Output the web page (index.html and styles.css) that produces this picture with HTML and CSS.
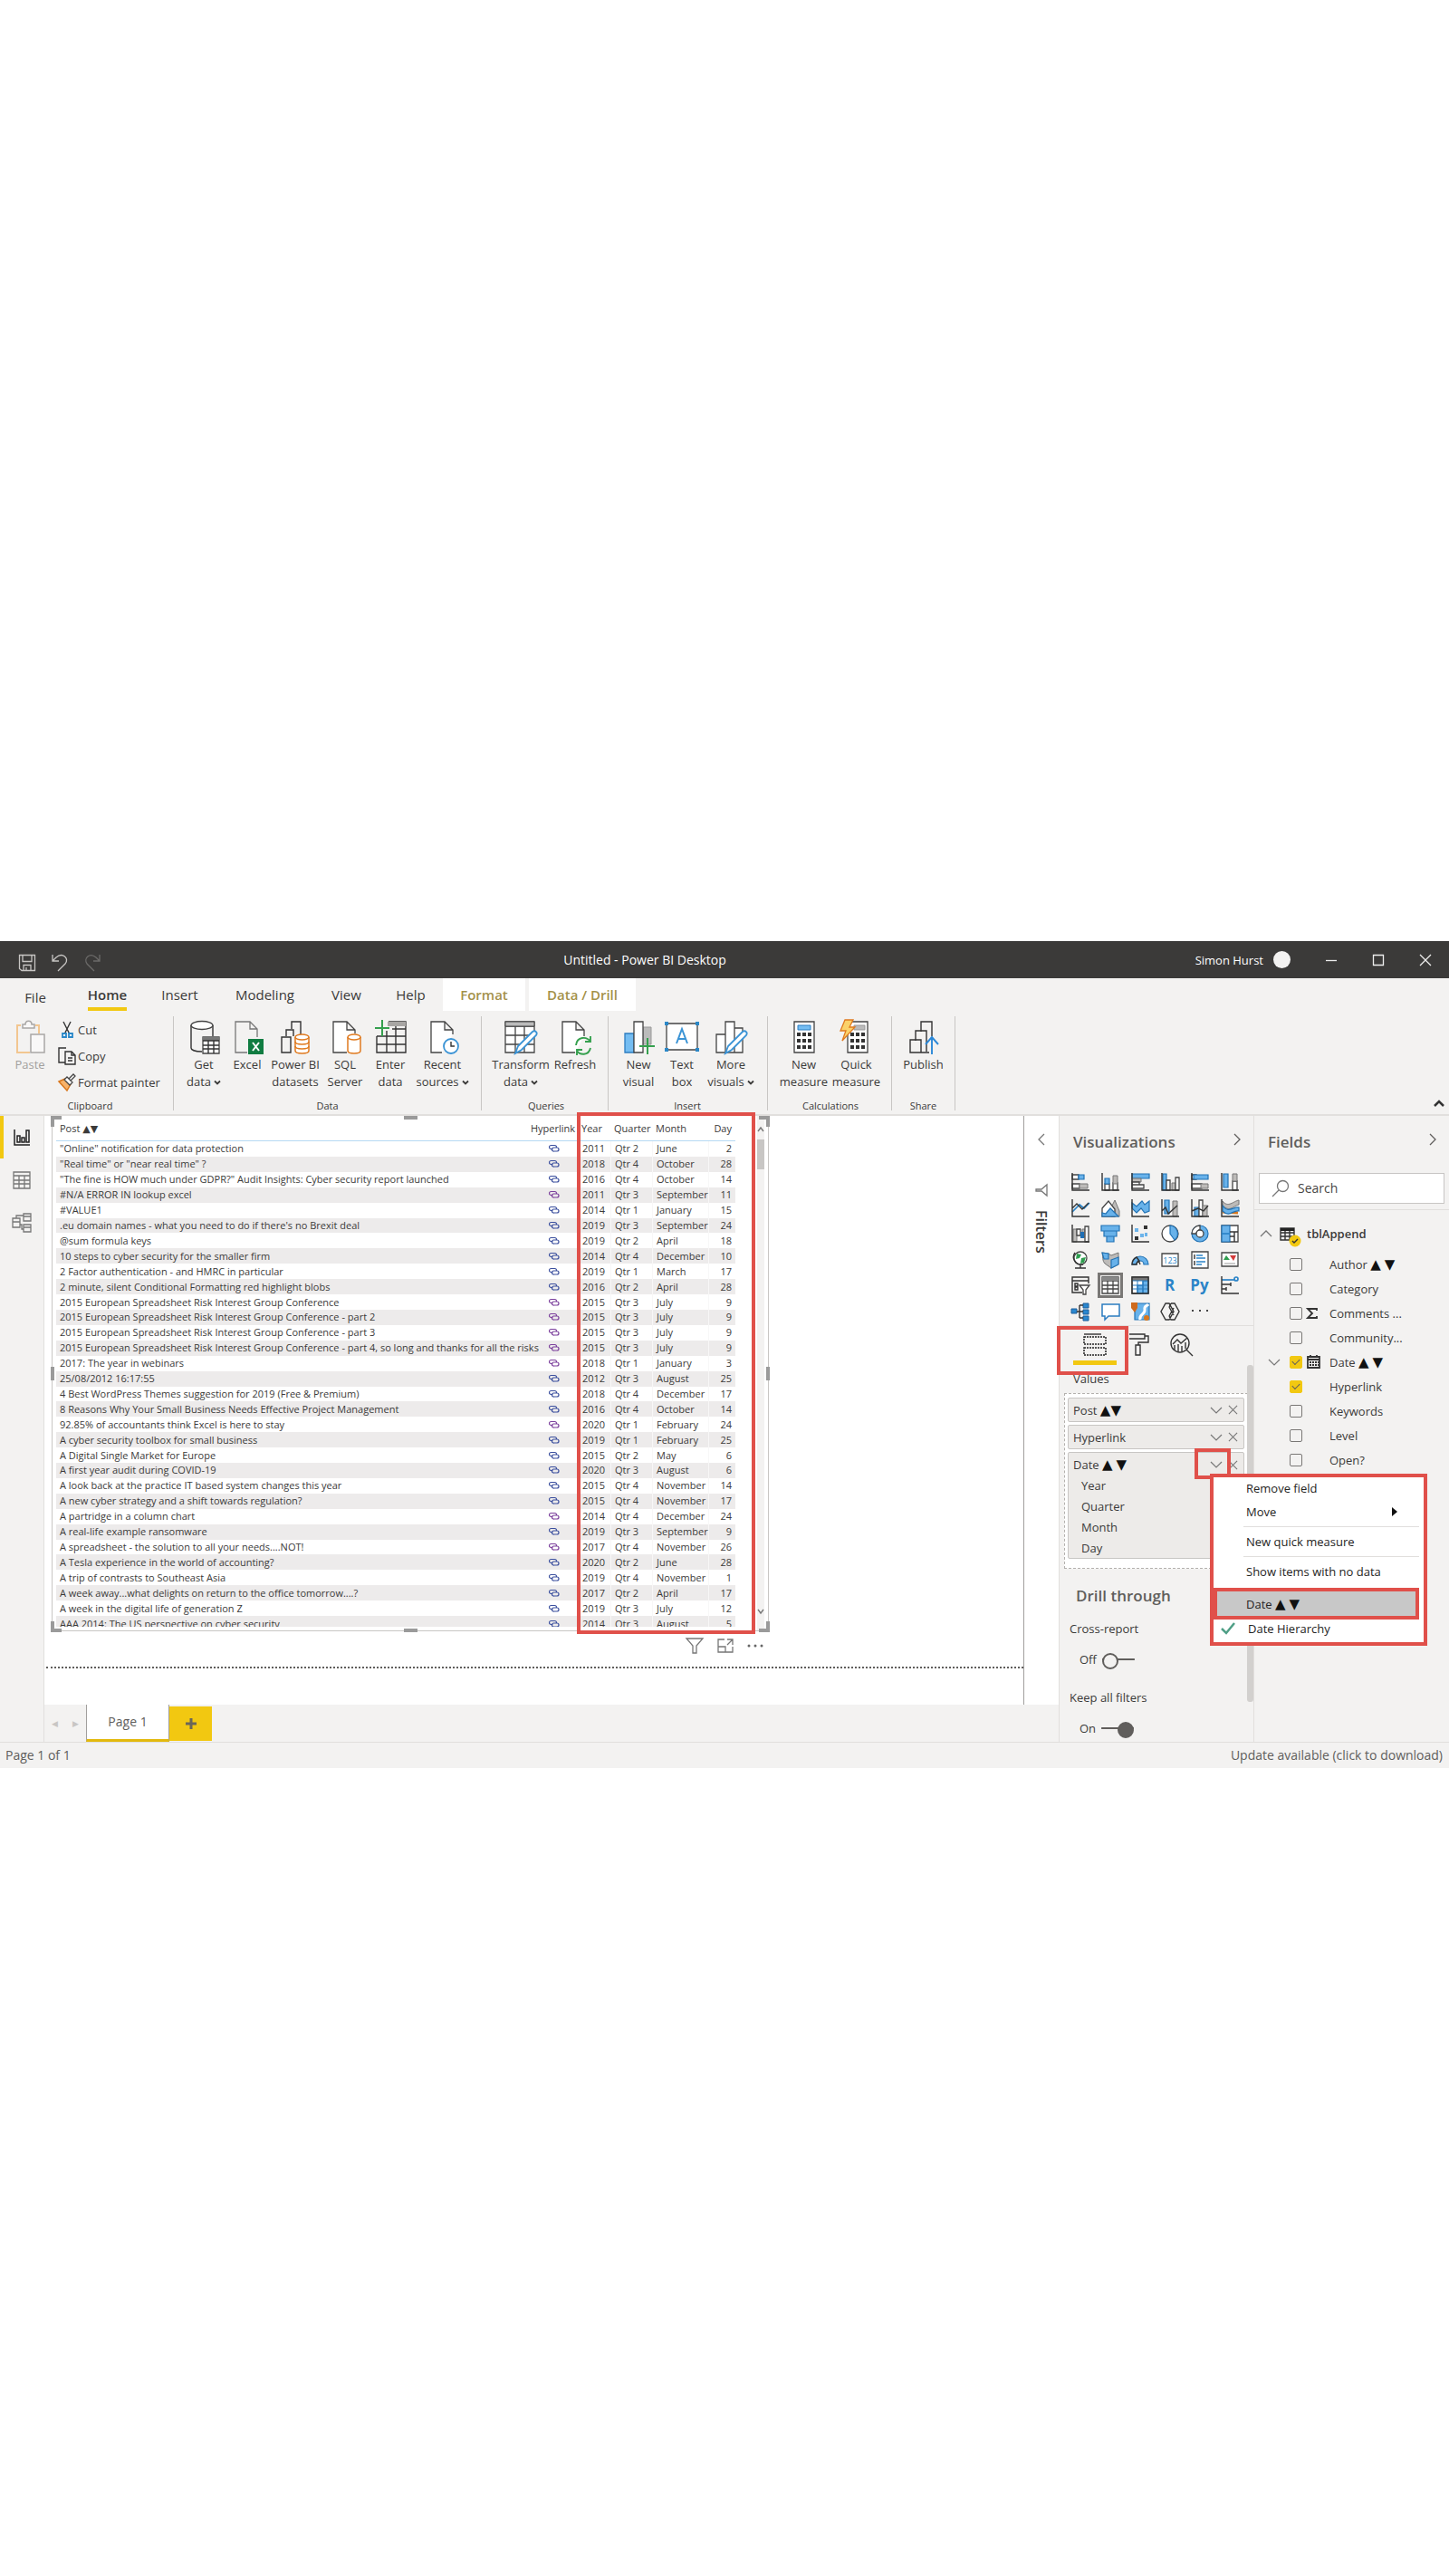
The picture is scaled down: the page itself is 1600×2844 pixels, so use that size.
FILE: index.html
```html
<!DOCTYPE html>
<html lang="en">
<head>
<meta charset="utf-8">
<title>Untitled - Power BI Desktop</title>
<link rel="stylesheet" href="styles.css">
</head>
<body>
<svg class="defs" aria-hidden="true">
  <symbol id="link" viewBox="0 0 12 10"><path d="M4.500 5.500H2.500a2 2 0 0 1 0-4h4a2 2 0 0 1 2 2M5 4h4a2 2 0 0 1 0 4H6a2 2 0 0 1-1-4" fill="none" stroke="currentColor" stroke-width="1.200"/></symbol>
  <symbol id="down" viewBox="0 0 14 8"><path d="M1 1l6 6 6-6" fill="none" stroke="currentColor" stroke-width="1.200"/></symbol>
  <symbol id="caret" viewBox="0 0 8 6"><path d="M1 1.500l3 3 3-3" fill="none" stroke="currentColor" stroke-width="1.800"/></symbol>
  <symbol id="cross" viewBox="0 0 12 12"><path d="M1 1l10 10M11 1L1 11" fill="none" stroke="currentColor" stroke-width="1.200"/></symbol>
  <symbol id="right" viewBox="0 0 8 14"><path d="M1 1l6 6-6 6" fill="none" stroke="currentColor" stroke-width="1.300"/></symbol>
</svg>
<div class="app">
  <header class="titlebar">
    <div class="quick">
      <button aria-label="Save"><svg width="20" height="20" viewBox="0 0 20 20"><path d="M1.500 1.500h17v17H4l-2.500-2zM5 1.500v7h10v-7M6 18.500v-6h8v6M9 18v-3" class="tl"/></svg></button>
      <button aria-label="Undo"><svg width="20" height="20" viewBox="0 0 20 20"><path d="M2 1v7h7M2 8l4-4c7-6 15 1 10 7l-8 8" class="tl"/></svg></button>
      <button aria-label="Redo" class="dim"><svg width="20" height="20" viewBox="0 0 20 20"><path d="M18 1v7h-7M18 8l-4-4C7-2 0 5 4 11l8 8" class="tl"/></svg></button>
    </div>
    <h1>Untitled - Power BI Desktop</h1>
    <div class="account">
      <span>Simon Hurst</span><i class="avatar"></i>
      <button aria-label="Minimize"><svg width="14" height="14"><path d="M1 7.500h12" class="wl"/></svg></button>
      <button aria-label="Maximize"><svg width="14" height="14"><path d="M1.500 1.500h11v11h-11z" class="wl"/></svg></button>
      <button aria-label="Close"><svg width="14" height="14"><path d="M1 1l12 12M13 1L1 13" class="wl"/></svg></button>
    </div>
  </header>

  <nav class="tabs">
    <button class="file">File</button><button class="active"><span>Home</span></button><button>Insert</button><button>Modeling</button><button>View</button><button>Help</button><button class="ctx">Format</button><button class="ctx">Data / Drill</button>
  </nav>

  <section class="ribbon">
    <div class="group clipboard">
      <div class="tools">
        <button class="tool off"><svg width="36" height="38" viewBox="0 0 36 38"><path d="M8 6H4v30h14M24 6h4v9" fill="none" stroke="#f2c690" stroke-width="2"/><path d="M10 9V5h3c0-5 7-5 7 0h3v4zM19 16h15v20H19z" fill="#f9f8f8" stroke="#a9a7a5" stroke-width="1.500"/></svg>Paste</button>
        <div class="small">
          <button><svg width="20" height="20" viewBox="0 0 20 20"><path d="M6 1l7 14M14 1L7 15" class="k"/><path d="M5 14h4v4H5zM12 14h4v4h-4z" fill="#fff" stroke="#2b88c8" stroke-width="1.800"/></svg>Cut</button>
          <button><svg width="20" height="20" viewBox="0 0 20 20"><path d="M8 17H1V1h8M8 5h7l4 4v10H8zM15 5v4h4M11 12h5M11 15h5" class="k"/></svg>Copy</button>
          <button><svg width="20" height="20" viewBox="0 0 20 20"><path d="M1 9l7-3 6 6-4 7z" fill="#f7b26a" stroke="#d9771c" stroke-width="1.500"/><path d="M7 7l3-3 6 6-3 3zM12 6l5-5 2 2-5 5" fill="#fff" stroke="#444" stroke-width="1.300"/></svg>Format painter</button>
        </div>
      </div>
      <h2>Clipboard</h2>
    </div>
    <div class="group data">
      <div class="tools">
        <button class="tool"><svg width="36" height="38" viewBox="0 0 36 38"><path d="M16 35C8 35 4 33 4 31V6M28 6v12" class="k"/><ellipse cx="16" cy="6" rx="12" ry="4.500" class="kw"/><path d="M17 19h18v18H17z" class="kw"/><path d="M17 19h18v4H17z" fill="#777"/><path d="M17 23h18M17 28h18M17 32h18M23 23v14M29 23v14" class="k"/></svg><span>Get</span><span>data <svg class="caret"><use href="#caret"/></svg></span></button>
        <button class="tool"><svg width="36" height="38" viewBox="0 0 36 38"><path d="M18 36H5V2h16l8 8v9M21 2v8h8" class="kg"/><path d="M19 21h17v17H19z" fill="#107c41"/><path d="M24 25l7 9M31 25l-7 9" stroke="#fff" stroke-width="2"/></svg><span>Excel</span></button>
        <button class="tool"><svg width="36" height="38" viewBox="0 0 36 38"><path d="M14 10V2h10v14M8 18v-7h8v7M3 19h10v17H3z" class="k"/><path d="M18 19v15c0 4 15 4 15 0V19" class="ow"/><ellipse cx="25.500" cy="19" rx="7.500" ry="3" class="ow"/><path d="M18 24c0 4 15 4 15 0M18 29c0 4 15 4 15 0" fill="none" stroke="#e07a1f" stroke-width="1.500"/></svg><span>Power BI</span><span>datasets</span></button>
        <button class="tool"><svg width="36" height="38" viewBox="0 0 36 38"><path d="M20 36H5V2h15l9 9v4M20 2v9h9" class="kw"/><path d="M21 19v15c0 4 14 4 14 0V19" class="ow"/><ellipse cx="28" cy="19" rx="7" ry="3" class="ow"/></svg><span>SQL</span><span>Server</span></button>
        <button class="tool"><svg width="36" height="38" viewBox="0 0 36 38"><path d="M3 18v18h32V2H16M3 18h32M3 27h32M14 12v24M24 6v30M20 10h15" class="k"/><path d="M15 2h20v5H15z" fill="#a8a6a4"/><path d="M1 9h16M9 0v18" stroke="#35a04e" stroke-width="2"/></svg><span>Enter</span><span>data</span></button>
        <button class="tool"><svg width="36" height="38" viewBox="0 0 36 38"><path d="M17 36H5V2h15l9 9v5M20 2v9h9" class="kw"/><circle cx="27" cy="29" r="8" fill="#fff" stroke="#3a93d5" stroke-width="1.800"/><path d="M27 24v5h4" class="k"/></svg><span>Recent</span><span>sources <svg class="caret"><use href="#caret"/></svg></span></button>
      </div>
      <h2>Data</h2>
    </div>
    <div class="group queries">
      <div class="tools">
        <button class="tool"><svg width="36" height="38" viewBox="0 0 36 38"><path d="M1 2h32v34H1zM1 7h32M1 17h32M1 27h32M12 7v29M22 7v29" class="kw"/><path d="M1 2h32v5H1z" fill="#bbb" stroke="#444"/><path d="M12 37l3-8 16-16c3-2 6 1 4 4L19 33z" class="pen"/></svg><span>Transform</span><span>data <svg class="caret"><use href="#caret"/></svg></span></button>
        <button class="tool"><svg width="36" height="38" viewBox="0 0 36 38"><path d="M18 36H4V2h15l9 9v7M19 2v9h9" class="kw"/><path d="M19 28c1-10 12-10 16-4M35 18v6h-6M35 31c-2 9-12 8-15 3M20 39v-6h6" fill="none" stroke="#35a04e" stroke-width="1.900"/></svg><span>Refresh</span></button>
      </div>
      <h2>Queries</h2>
    </div>
    <div class="group insert">
      <div class="tools">
        <button class="tool"><svg width="36" height="38" viewBox="0 0 36 38"><path d="M3 15h10v21H3z" fill="#74bdf2" stroke="#2b7cc0" stroke-width="1.300"/><path d="M23 8h9v19h-9z" fill="#bbb" stroke="#999"/><path d="M13 2h10v34H13z" class="kw"/><path d="M19 29h17M28 20v18" stroke="#35a04e" stroke-width="2"/></svg><span>New</span><span>visual</span></button>
        <button class="tool"><svg width="38" height="38" viewBox="0 0 38 38"><path d="M2 4h34v29H2z" class="kw"/><path d="M13 26l6-16 6 16M15 21h8" fill="none" stroke="#3a93d5" stroke-width="2"/><path d="M0 2h4v4H0zM34 2h4v4h-4zM0 31h4v4H0zM34 31h4v4h-4z" fill="#2b88c8"/></svg><span>Text</span><span>box</span></button>
        <button class="tool"><svg width="36" height="38" viewBox="0 0 36 38"><path d="M2 16h10v20H2zM22 9h9v27h-9zM12 2h10v34H12z" class="kw"/><path d="M12 37l3-8 16-16c3-2 6 1 4 4L19 33z" class="pen"/></svg><span>More</span><span>visuals <svg class="caret"><use href="#caret"/></svg></span></button>
      </div>
      <h2>Insert</h2>
    </div>
    <div class="group calc">
      <div class="tools">
        <button class="tool"><svg width="36" height="38" viewBox="0 0 36 38"><path d="M7 2h22v34H7z" class="kw"/><path d="M11 6h14v5H11z" fill="#74bdf2" stroke="#2b7cc0"/><path d="M10 16h17M10 23h17M10 30h17" stroke="#333" stroke-width="4" stroke-dasharray="4 2"/></svg><span>New</span><span>measure</span></button>
        <button class="tool"><svg width="36" height="38" viewBox="0 0 36 38"><path d="M8 2h22v34H8z" class="kw"/><path d="M15 6h12v5H15z" fill="#bbb" stroke="#999"/><path d="M11 16h17M11 23h17M11 30h17" stroke="#333" stroke-width="4" stroke-dasharray="4 2"/><path d="M5 0h9l-4 8h6L2 23l4-11H0z" fill="#fbd26a" stroke="#e07a1f" stroke-width="1.300"/></svg><span>Quick</span><span>measure</span></button>
      </div>
      <h2>Calculations</h2>
    </div>
    <div class="group share">
      <div class="tools">
        <button class="tool"><svg width="36" height="38" viewBox="0 0 36 38"><path d="M15 13V2h12v16M9 23V12h12v23M3 22h12v14H3zM15 36h9" class="k"/><path d="M27 38V20M20 27l7-8 7 8" fill="none" stroke="#2b88d8" stroke-width="1.900"/></svg><span>Publish</span></button>
      </div>
      <h2>Share</h2>
    </div>
    <button class="collapse" aria-label="Collapse ribbon"><svg width="12" height="8" viewBox="0 0 12 8"><path d="M1 7l5-5 5 5" fill="none" stroke="#333" stroke-width="2.500"/></svg></button>
  </section>

  <div class="workspace">
    <nav class="views">
      <button class="active" aria-label="Report"><svg width="20" height="20" viewBox="0 0 20 20"><path d="M2 1v17h17M5 8h3v7H5zM10 10h3v5h-3zM15 2h3v13h-3z" fill="none" stroke="#222" stroke-width="1.500"/></svg></button>
      <button aria-label="Data"><svg width="20" height="20" viewBox="0 0 20 20"><path d="M1 1h18v18H1zM1 5h18M1 10h18M1 14h18M7 5v14M13 5v14" class="kg"/></svg></button>
      <button aria-label="Model"><svg width="22" height="22" viewBox="0 0 22 22"><path d="M1 6h8v10H1zM1 10h8M13 1h8v8h-8zM13 4h8M13 13h8v8h-8zM13 16h8M5 6V3h8M9 13h2v5h2" class="kg"/></svg></button>
    </nav>

    <main class="report">
      <div class="stage">
        <div class="canvas">
          <article class="visual">
            <div class="scroller">
            <table>
              <colgroup><col class="c-post"><col class="c-link"><col class="c-year"><col class="c-qtr"><col class="c-month"><col class="c-day"></colgroup>
              <thead><tr><th>Post ▲▼</th><th>Hyperlink</th><th>Year</th><th>Quarter</th><th>Month</th><th>Day</th></tr></thead>
              <tbody>
              <tr><td>"Online" notification for data protection</td><td><a href="#"><svg><use href="#link"/></svg></a></td><td>2011</td><td>Qtr 2</td><td>June</td><td>2</td></tr>
              <tr><td>"Real time" or "near real time" ?</td><td><a href="#"><svg><use href="#link"/></svg></a></td><td>2018</td><td>Qtr 4</td><td>October</td><td>28</td></tr>
              <tr><td>"The fine is HOW much under GDPR?" Audit Insights: Cyber security report launched</td><td><a href="#"><svg><use href="#link"/></svg></a></td><td>2016</td><td>Qtr 4</td><td>October</td><td>14</td></tr>
              <tr><td>#N/A ERROR IN lookup excel</td><td><a href="#" class="seen"><svg><use href="#link"/></svg></a></td><td>2011</td><td>Qtr 3</td><td>September</td><td>11</td></tr>
              <tr><td>#VALUE1</td><td><a href="#"><svg><use href="#link"/></svg></a></td><td>2014</td><td>Qtr 1</td><td>January</td><td>15</td></tr>
              <tr><td>.eu domain names - what you need to do if there's no Brexit deal</td><td><a href="#"><svg><use href="#link"/></svg></a></td><td>2019</td><td>Qtr 3</td><td>September</td><td>24</td></tr>
              <tr><td>@sum formula keys</td><td><a href="#"><svg><use href="#link"/></svg></a></td><td>2019</td><td>Qtr 2</td><td>April</td><td>18</td></tr>
              <tr><td>10 steps to cyber security for the smaller firm</td><td><a href="#"><svg><use href="#link"/></svg></a></td><td>2014</td><td>Qtr 4</td><td>December</td><td>10</td></tr>
              <tr><td>2 Factor authentication - and HMRC in particular</td><td><a href="#"><svg><use href="#link"/></svg></a></td><td>2019</td><td>Qtr 1</td><td>March</td><td>17</td></tr>
              <tr><td>2 minute, silent Conditional Formatting red highlight blobs</td><td><a href="#"><svg><use href="#link"/></svg></a></td><td>2016</td><td>Qtr 2</td><td>April</td><td>28</td></tr>
              <tr><td>2015 European Spreadsheet Risk Interest Group Conference</td><td><a href="#" class="seen"><svg><use href="#link"/></svg></a></td><td>2015</td><td>Qtr 3</td><td>July</td><td>9</td></tr>
              <tr><td>2015 European Spreadsheet Risk Interest Group Conference - part 2</td><td><a href="#" class="seen"><svg><use href="#link"/></svg></a></td><td>2015</td><td>Qtr 3</td><td>July</td><td>9</td></tr>
              <tr><td>2015 European Spreadsheet Risk Interest Group Conference - part 3</td><td><a href="#" class="seen"><svg><use href="#link"/></svg></a></td><td>2015</td><td>Qtr 3</td><td>July</td><td>9</td></tr>
              <tr><td>2015 European Spreadsheet Risk Interest Group Conference - part 4, so long and thanks for all the risks</td><td><a href="#" class="seen"><svg><use href="#link"/></svg></a></td><td>2015</td><td>Qtr 3</td><td>July</td><td>9</td></tr>
              <tr><td>2017: The year in webinars</td><td><a href="#" class="seen"><svg><use href="#link"/></svg></a></td><td>2018</td><td>Qtr 1</td><td>January</td><td>3</td></tr>
              <tr><td>25/08/2012 16:17:55</td><td><a href="#"><svg><use href="#link"/></svg></a></td><td>2012</td><td>Qtr 3</td><td>August</td><td>25</td></tr>
              <tr><td>4 Best WordPress Themes suggestion for 2019 (Free &amp; Premium)</td><td><a href="#"><svg><use href="#link"/></svg></a></td><td>2018</td><td>Qtr 4</td><td>December</td><td>17</td></tr>
              <tr><td>8 Reasons Why Your Small Business Needs Effective Project Management</td><td><a href="#"><svg><use href="#link"/></svg></a></td><td>2016</td><td>Qtr 4</td><td>October</td><td>14</td></tr>
              <tr><td>92.85% of accountants think Excel is here to stay</td><td><a href="#" class="seen"><svg><use href="#link"/></svg></a></td><td>2020</td><td>Qtr 1</td><td>February</td><td>24</td></tr>
              <tr><td>A cyber security toolbox for small business</td><td><a href="#"><svg><use href="#link"/></svg></a></td><td>2019</td><td>Qtr 1</td><td>February</td><td>25</td></tr>
              <tr><td>A Digital Single Market for Europe</td><td><a href="#"><svg><use href="#link"/></svg></a></td><td>2015</td><td>Qtr 2</td><td>May</td><td>6</td></tr>
              <tr><td>A first year audit during COVID-19</td><td><a href="#"><svg><use href="#link"/></svg></a></td><td>2020</td><td>Qtr 3</td><td>August</td><td>6</td></tr>
              <tr><td>A look back at the practice IT based system changes this year</td><td><a href="#"><svg><use href="#link"/></svg></a></td><td>2015</td><td>Qtr 4</td><td>November</td><td>14</td></tr>
              <tr><td>A new cyber strategy and a shift towards regulation?</td><td><a href="#"><svg><use href="#link"/></svg></a></td><td>2015</td><td>Qtr 4</td><td>November</td><td>17</td></tr>
              <tr><td>A partridge in a column chart</td><td><a href="#" class="seen"><svg><use href="#link"/></svg></a></td><td>2014</td><td>Qtr 4</td><td>December</td><td>24</td></tr>
              <tr><td>A real-life example ransomware</td><td><a href="#"><svg><use href="#link"/></svg></a></td><td>2019</td><td>Qtr 3</td><td>September</td><td>9</td></tr>
              <tr><td>A spreadsheet - the solution to all your needs....NOT!</td><td><a href="#" class="seen"><svg><use href="#link"/></svg></a></td><td>2017</td><td>Qtr 4</td><td>November</td><td>26</td></tr>
              <tr><td>A Tesla experience in the world of accounting?</td><td><a href="#"><svg><use href="#link"/></svg></a></td><td>2020</td><td>Qtr 2</td><td>June</td><td>28</td></tr>
              <tr><td>A trip of contrasts to Southeast Asia</td><td><a href="#"><svg><use href="#link"/></svg></a></td><td>2019</td><td>Qtr 4</td><td>November</td><td>1</td></tr>
              <tr><td>A week away...what delights on return to the office tomorrow....?</td><td><a href="#"><svg><use href="#link"/></svg></a></td><td>2017</td><td>Qtr 2</td><td>April</td><td>17</td></tr>
              <tr><td>A week in the digital life of generation Z</td><td><a href="#"><svg><use href="#link"/></svg></a></td><td>2019</td><td>Qtr 3</td><td>July</td><td>12</td></tr>
              <tr><td>AAA 2014: The US perspective on cyber security</td><td><a href="#"><svg><use href="#link"/></svg></a></td><td>2014</td><td>Qtr 3</td><td>August</td><td>5</td></tr>
              </tbody>
            </table>
            </div>
            <div class="vscroll"><svg width="8" height="6" viewBox="0 0 8 6"><path d="M1 5l3-4 3 4" fill="none" stroke="#777" stroke-width="1.400"/></svg><i></i><svg width="8" height="6" viewBox="0 0 8 6"><path d="M1 1l3 4 3-4" fill="none" stroke="#777" stroke-width="1.400"/></svg></div>
            <i class="h tl-c"></i><i class="h tr-c"></i><i class="h bl-c"></i><i class="h br-c"></i><i class="h top"></i><i class="h bottom"></i><i class="h left"></i><i class="h rite"></i>
            <div class="mark mark-cols"></div>
          </article>
          <div class="visual-tools">
            <button aria-label="Filters"><svg width="20" height="18" viewBox="0 0 20 18"><path d="M1 1h18l-7 8v8H8V9z" class="kg"/></svg></button>
            <button aria-label="Focus mode"><svg width="18" height="16" viewBox="0 0 18 16"><path d="M8 1H1v14h16V9M1 9h8v6M11 1h6v6M17 1l-6 6" class="kg"/></svg></button>
            <button aria-label="More options"><svg width="18" height="4" fill="#666"><circle cx="2" cy="2" r="1.500"/><circle cx="9" cy="2" r="1.500"/><circle cx="16" cy="2" r="1.500"/></svg></button>
          </div>
          <div class="page-edge"></div>
        </div>
        <aside class="filters">
          <button aria-label="Expand filters"><svg width="8" height="14" viewBox="0 0 8 14"><path d="M7 1L1 7l6 6" class="kg"/></svg></button>
          <svg width="14" height="14" viewBox="0 0 14 14"><path d="M13 1v12L7 8H1V6h6z" class="kg"/></svg>
          <h2>Filters</h2>
        </aside>
      </div>
      <div class="pages">
        <button class="arrow" aria-label="Previous page">◀</button><button class="arrow" aria-label="Next page">▶</button>
        <button class="page">Page 1</button>
        <button class="add" aria-label="New page"><svg width="14" height="14"><path d="M7 1v12M1 7h12" stroke="#6b6658" stroke-width="3"/></svg></button>
      </div>
    </main>

    <aside class="viz">
      <div class="pane-head"><h2>Visualizations</h2><button aria-label="Collapse"><svg width="8" height="14"><use href="#right"/></svg></button></div>
      <div class="gallery">
        <button aria-label="Stacked bar"><svg viewBox="0 0 20 20"><path d="M1 2h7v5H1zM1 12h8v5H1z" class="kw"/><path d="M8 2h6v5H8z" class="b"/><path d="M9 12h9v5H9z" class="g"/><path d="M1 0v19h19" class="k"/></svg></button>
        <button aria-label="Stacked column"><svg viewBox="0 0 20 20"><path d="M4 12h5v7H4zM13 11h5v8h-5z" class="kw"/><path d="M4 6h5v6H4z" class="b"/><path d="M13 3h5v9h-5z" class="g"/><path d="M1 0v19h19" class="k"/></svg></button>
        <button aria-label="Clustered bar"><svg viewBox="0 0 20 20"><path d="M1 1h19v5H1z" class="b"/><path d="M1 6h10v4H1z" class="g"/><path d="M1 10h8v3H1zM1 13h13v4H1z" class="kw"/><path d="M1 0v19h19" class="k"/></svg></button>
        <button aria-label="Clustered column"><svg viewBox="0 0 20 20"><path d="M2 1h4v18H2z" class="b"/><path d="M6 8h4v11H6z" class="kw"/><path d="M12 11h4v8h-4z" class="g"/><path d="M16 5h4v14h-4z" class="kw"/><path d="M1 0v19h19" class="k"/></svg></button>
        <button aria-label="100% bar"><svg viewBox="0 0 20 20"><path d="M1 2h5v5H1zM1 12h11v5H1z" class="kw"/><path d="M3 2h16v5H3z" class="b"/><path d="M11 12h8v5h-8z" class="g"/><path d="M1 0v19h19" class="k"/></svg></button>
        <button aria-label="100% column"><svg viewBox="0 0 20 20"><path d="M3 1h5v15H3z" class="b"/><path d="M13 9h5v10h-5z" class="kw"/><path d="M13 1h5v8h-5z" class="g"/><path d="M1 0v19h19" class="k"/></svg></button>

        <button aria-label="Line"><svg viewBox="0 0 20 20"><path d="M1 14l8-8 5 4 6-6" class="bl"/><path d="M1 10l5-5 6 6 7-7M1 0v19h19" class="k"/></svg></button>
        <button aria-label="Area"><svg viewBox="0 0 20 20"><path d="M9 13l6-12 5 12v6h-9z" class="g"/><path d="M1 10l7-8 7 9v8H1z" class="kw"/><path d="M1 19V15l4 1 5-6 9 9z" class="b"/></svg></button>
        <button aria-label="Stacked area"><svg viewBox="0 0 20 20"><path d="M1 4l5 4 6-6 3 4 5-4v11l-5 2-4-5-5 5-5-5z" class="b"/><path d="M1 0v19h19" class="k"/></svg></button>
        <button aria-label="Line and stacked column"><svg viewBox="0 0 20 20"><path d="M4 1h5v15H4z" class="b"/><path d="M13 2h5v17h-5z" class="g"/><path d="M1 13l4-4 3 7 10-9M1 0v19h19" class="k"/></svg></button>
        <button aria-label="Line and clustered column"><svg viewBox="0 0 20 20"><path d="M4 9h5v10H4z" class="b"/><path d="M9 1h4v18H9z" class="kw"/><path d="M13 7h5v12h-5z" class="g"/><path d="M1 13l7-3 6 3 5-6M1 0v19h19" class="k"/></svg></button>
        <button aria-label="Ribbon"><svg viewBox="0 0 20 20"><path d="M2 14l17 1" stroke="#d9771c" stroke-width="3"/><path d="M2 2c6 8 12 0 18-1v5c-6 1-10 9-18 1z" class="g"/><path d="M2 7c6 9 12 1 18 2v4c-6-2-10 8-18 0z" class="b"/><path d="M1 0v19h19" class="k"/></svg></button>

        <button aria-label="Waterfall"><svg viewBox="0 0 20 20"><path d="M2 5h4v14H2zM12 5h3v9h-3z" class="g"/><path d="M6 5h4v7H6zM15 2h4v17h-4z" class="kw"/><path d="M10 8h4v7h-4z" fill="#1f6fb5"/><path d="M1 0v19h19" class="k"/></svg></button>
        <button aria-label="Funnel"><svg viewBox="0 0 20 20"><path d="M0 1h20v6H0zM3 7h14v6H3zM6 13h8v6H6z" class="b"/></svg></button>
        <button aria-label="Scatter"><svg viewBox="0 0 20 20"><path d="M4 4h4v4H4zM10 10h4v4h-4zM15 9h3v4h-3z" fill="#6db4ea"/><path d="M14 1h4v4h-4zM4 13h4v4H4z" fill="#333"/><path d="M1 0v19h19" class="k"/></svg></button>
        <button aria-label="Pie"><svg viewBox="0 0 20 20"><circle cx="10" cy="10" r="9" class="kw"/><path d="M10 10V1a9 9 0 0 1 5 16z" class="b"/></svg></button>
        <button aria-label="Donut"><svg viewBox="0 0 20 20"><circle cx="10" cy="10" r="9" class="b"/><path d="M10 1a9 9 0 0 0-9 9h5a4 4 0 0 1 4-4z" class="kw"/><circle cx="10" cy="10" r="4" class="kw"/></svg></button>
        <button aria-label="Treemap"><svg viewBox="0 0 20 20"><path d="M1 1h18v18H1z" class="kw"/><path d="M1 1h9v18H1z" class="b"/><path d="M1 10h9" class="bl"/><path d="M10 8h9M15 8v11M10 13h5" class="k"/></svg></button>

        <button aria-label="Map"><svg viewBox="0 0 20 20"><circle cx="10" cy="8" r="7" class="kw"/><path d="M6 3l5 1-2 4-4 1zM11 8l5-1-2 6-4 1z" fill="#2f9e4f"/><path d="M4 2C0 8 4 16 13 15M10 15v4M4 19h12" class="k"/></svg></button>
        <button aria-label="Filled map"><svg viewBox="0 0 20 20"><path d="M1 2l7 1 3 2 8-3v13l-8 4-7-5C1 11 2 6 1 2z" class="g"/><path d="M1 2l7 1v6H3zM11 10l8-3v8l-8 4z" class="b"/></svg></button>
        <button aria-label="Gauge"><svg viewBox="0 0 20 20"><path d="M1 15a9 9 0 0 1 18 0h-5a4 4 0 0 0-8 0z" class="b"/><path d="M1 15a9 9 0 0 1 5-8l3 4a4 4 0 0 0-3 4zM10 15l-3-7" class="k"/></svg></button>
        <button aria-label="Card"><svg viewBox="0 0 20 20"><path d="M1 3h18v14H1z" class="kw"/><text x="10" y="14" text-anchor="middle" class="num">123</text></svg></button>
        <button aria-label="Multi-row card"><svg viewBox="0 0 20 20"><path d="M1 1h18v18H1z" class="kw"/><path d="M4 4v5M4 11v5" class="k"/><path d="M6 5h7M6 8h10M6 12h10M6 15h6" class="bl"/></svg></button>
        <button aria-label="KPI"><svg viewBox="0 0 20 20"><path d="M1 2h18v15H1z" class="kw"/><path d="M3 10l3-5 4 5z" fill="#2f9e4f"/><path d="M10 5h7l-3 6z" fill="#d23a3a"/><path d="M4 14h12" stroke="#999"/></svg></button>

        <button aria-label="Slicer"><svg viewBox="0 0 20 20"><path d="M12 18H1V1h18v7M1 5h18M4 8h3v3H4zM4 12h3v3H4z" class="k"/><path d="M9 10h11l-4 5v5h-3v-5z" class="kw"/></svg></button>
        <button aria-label="Table" class="picked"><svg viewBox="0 0 20 20"><path d="M1 1h18v18H1zM1 5h18M1 10h18M1 14h18M7 5v14M13 5v14" class="kw"/><path d="M1 1h18v4H1z" fill="#888"/></svg></button>
        <button aria-label="Matrix"><svg viewBox="0 0 20 20"><path d="M1 1h18v18H1z" class="kw"/><path d="M7 10h6v9H7zM13 5h6v14h-6z" class="b"/><path d="M1 1h18v4H1z" fill="#777"/><path d="M1 5h18M1 10h18M1 14h18M7 5v14M13 5v14" stroke="#2b7cc0"/><path d="M1 1h18v18H1z" class="k"/></svg></button>
        <button aria-label="R script" class="word">R</button>
        <button aria-label="Python" class="word">Py</button>
        <button aria-label="Key influencers"><svg viewBox="0 0 20 20"><path d="M1 4h14" class="bl"/><circle cx="17" cy="3" r="2" class="bl"/><path d="M1 0v19h19M1 9h10M1 14h5M11 7v4M6 12v4" class="k"/></svg></button>

        <button aria-label="Decomposition tree"><svg viewBox="0 0 20 20"><path d="M0 7h6v5H0zM13 1h6v5h-6zM13 8h6v5h-6zM13 15h6v5h-6z" fill="#2b88d0" stroke="#1f5f9a"/><path d="M6 10h7M9 3v14M9 3h4M9 17h4" class="k"/></svg></button>
        <button aria-label="Q&amp;A"><svg viewBox="0 0 20 20"><path d="M1 2h19v13H8l-4 4v-4H1z" fill="#fff" stroke="#2b7cc0" stroke-width="1.500"/></svg></button>
        <button aria-label="ArcGIS"><svg viewBox="0 0 20 20"><path d="M4 1h16v18H4z" class="b"/><path d="M10 19c-2-6 6-6 5-11s3-4 4-6" fill="none" stroke="#fff" stroke-width="3"/><path d="M0 0h7v6l-3 5-4-5z" fill="#cf6a1d"/><circle cx="17" cy="17" r="3" fill="#d9771c"/></svg></button>
        <button aria-label="Power Apps"><svg viewBox="0 0 20 20"><path d="M5 1h4l5 9-5 9H5l-5-9zM11 1h4l5 9-5 9h-4l-2-4M9 5l2-4M9 5l5 9M14 6l-5 9" class="k"/></svg></button>
        <button aria-label="More visuals"><svg viewBox="0 0 20 20"><path d="M1 8h2v2H1zM9 8h2v2H9zM17 8h2v2h-2z" fill="#444"/></svg></button>
      </div>
      <div class="modes">
        <button class="active" aria-label="Fields"><svg width="26" height="26" viewBox="0 0 26 26"><path d="M1 1h19" class="k"/><path d="M1 4h24v8H1zM1 16h24v8H1z" fill="none" stroke="#222" stroke-width="1.500" stroke-dasharray="2 1"/></svg></button>
        <button aria-label="Format"><svg width="24" height="26" viewBox="0 0 24 26"><path d="M1 1h17v5H1M18 3h4v7H11v3M8 13h5v11H8z" class="k"/></svg></button>
        <button aria-label="Analytics"><svg width="26" height="26" viewBox="0 0 26 26"><circle cx="11" cy="11" r="10" class="k"/><path d="M18 18l7 7M3 12l5-5 4 4 7-6M5 13v5M9 12v8M13 14v6M17 10v7" class="k"/></svg></button>
        <div class="mark mark-fields"></div>
      </div>
      <div class="wells">
        <h3>Values</h3>
        <div class="well">
          <div class="pill"><span>Post <em>▲▼</em></span><button aria-label="Options"><svg class="dn"><use href="#down"/></svg></button><button aria-label="Remove"><svg class="cr"><use href="#cross"/></svg></button></div>
          <div class="pill"><span>Hyperlink</span><button aria-label="Options"><svg class="dn"><use href="#down"/></svg></button><button aria-label="Remove"><svg class="cr"><use href="#cross"/></svg></button></div>
          <div class="pill open"><span>Date <em>▲ ▼</em></span><button aria-label="Options"><svg class="dn"><use href="#down"/></svg></button><button aria-label="Remove"><svg class="cr"><use href="#cross"/></svg></button>
            <ul><li>Year</li><li>Quarter</li><li>Month</li><li>Day</li></ul>
            <div class="mark mark-arrow"></div>
            <div class="menu">
              <button class="first">Remove field</button>
              <button>Move<svg width="6" height="10"><path d="M0 0l6 5-6 5z" fill="#111"/></svg></button>
              <hr>
              <button>New quick measure</button>
              <hr>
              <button>Show items with no data</button>
              <button class="hot"><span>Date <em>▲ ▼</em></span></button>
              <button class="ticked"><svg width="16" height="14" viewBox="0 0 16 14"><path d="M1 7l5 5 9-11" fill="none" stroke="#4f9f86" stroke-width="2.500"/></svg>Date Hierarchy</button>
            </div>
          </div>
        </div>
        <h2>Drill through</h2>
        <div class="switches">
          <span>Cross-report</span>
          <label>Off<input type="checkbox"></label>
          <span>Keep all filters</span>
          <label>On<input type="checkbox" checked></label>
        </div>
        <i class="thumb"></i>
      </div>
    </aside>

    <aside class="fields">
      <div class="pane-head"><h2>Fields</h2><button aria-label="Collapse"><svg width="8" height="14"><use href="#right"/></svg></button></div>
      <label class="search"><svg width="20" height="20" viewBox="0 0 20 20"><circle cx="12.500" cy="7.500" r="6" class="kg"/><path d="M8 12l-7 7" class="kg"/></svg><input type="text" placeholder="Search" aria-label="Search"></label>
      <div class="tree">
        <div class="node"><svg class="up" width="14" height="8" viewBox="0 0 14 8"><path d="M1 7l6-6 6 6" class="kg"/></svg><svg class="tbl" width="24" height="22" viewBox="0 0 24 22"><path d="M1 1h15v13H1zM1 6h15M1 10h15M6 3v11M11 3v11" class="k"/><path d="M1 1h15v3H1z" fill="#222"/><circle cx="17" cy="15" r="6.500" fill="#f2c811"/><path d="M14 15l2 2 4-4" class="k"/></svg><b>tblAppend</b></div>
        <label class="leaf"><i></i><input type="checkbox"><i></i><span>Author <em>▲ ▼</em></span></label>
        <label class="leaf"><i></i><input type="checkbox"><i></i>Category</label>
        <label class="leaf"><i></i><input type="checkbox"><svg width="12" height="12" viewBox="0 0 12 12"><path d="M11 3V1H1l5 5-5 5h10V9" class="k2"/></svg>Comments ...</label>
        <label class="leaf"><i></i><input type="checkbox"><i></i>Community...</label>
        <label class="leaf"><svg width="14" height="8" class="kgc"><use href="#down"/></svg><input type="checkbox" checked><svg width="15" height="15" viewBox="0 0 15 15"><path d="M1 2h13v12H1zM1 5h13M4 0v3M11 0v3" class="k2"/><path d="M3 8h10M3 11h10" stroke="#333" stroke-width="2" stroke-dasharray="2 1"/></svg><span>Date <em>▲ ▼</em></span></label>
        <label class="leaf"><i></i><input type="checkbox" checked><i></i>Hyperlink</label>
        <label class="leaf"><i></i><input type="checkbox"><i></i>Keywords</label>
        <label class="leaf"><i></i><input type="checkbox"><i></i>Level</label>
        <label class="leaf"><i></i><input type="checkbox"><i></i>Open?</label>
      </div>
    </aside>
  </div>

  <footer class="status"><span>Page 1 of 1</span><a href="#">Update available (click to download)</a></footer>
</div>
</body>
</html>
```
FILE: styles.css
```css
* { box-sizing: border-box; }
body { margin: 0; background: #fff; color: #3b3a39; font: 13px/18px "Open Sans", "Noto Sans", "DejaVu Sans", sans-serif; }
h1, h2, h3, ul { margin: 0; padding: 0; font-weight: 400; font-size: inherit; list-style: none; }
button { border: 0; padding: 0; margin: 0; background: none; font: inherit; color: inherit; }
svg { display: block; overflow: visible; flex: none; }
a { color: inherit; text-decoration: none; }
em { font-style: normal; font-size: 15px; line-height: 16px; color: #111; }
.defs { position: absolute; width: 0; height: 0; }
.k { fill: none; stroke: #333; stroke-width: 1.4; }
.k2 { fill: none; stroke: #333; stroke-width: 1.8; }
.kw { fill: #fff; stroke: #444; stroke-width: 1.3; }
.kg { fill: none; stroke: #777; stroke-width: 1.3; }
.b { fill: #68b2ea; stroke: #2273b5; stroke-width: 1.2; }
.g { fill: #bdbbb9; stroke: #777; stroke-width: 1; }
.bl { fill: none; stroke: #2b84c8; stroke-width: 1.7; }
.ow { fill: #fff; stroke: #e07a1f; stroke-width: 1.5; }
.pen { fill: #fff; stroke: #3a93d5; stroke-width: 1.8; }
.tl { fill: none; stroke: #c8c6c4; stroke-width: 1.3; }
.wl { fill: none; stroke: #eee; stroke-width: 1.3; }
.num { font: 9px "Open Sans", sans-serif; fill: #2b84c8; }
.mark { position: absolute; border: 4px solid #e0504a; pointer-events: none; }

.app { margin-top: 1039px; background: #f3f2f1; }
.titlebar { height: 41px; background: #3b3a39; color: #fff; display: grid; grid-template-columns: 1fr auto 1fr; align-items: center; }
.titlebar h1 { font-size: 14px; padding-right: 176px; white-space: nowrap; }
.quick { display: flex; gap: 16px; padding: 6px 0 0 20px; }
.dim { opacity: .35; }
.account { display: flex; align-items: center; justify-content: flex-end; gap: 38px; padding-right: 19px; white-space: nowrap; }
.avatar { width: 19px; height: 19px; border-radius: 50%; background: #f3f2f1; margin-left: -27px; }

.tabs { display: grid; grid-template-columns: 78px 81px 79px 109px 71px 71px 91px 122px; height: 36px; font-size: 15px; line-height: 20px; }
.tabs button { padding-bottom: 1px; }
.tabs .file { padding-top: 6px; }
.tabs .active { font-weight: 600; display: flex; justify-content: center; align-items: stretch; padding: 8px 0 0; }
.tabs .active span { border-bottom: 4px solid #f2c811; }
.tabs .ctx { background: #fff; color: #a4914a; font-weight: 600; }
.tabs .ctx:last-child { margin-left: 4px; }

.ribbon { display: flex; height: 116px; padding: 6px 0 4px; border-bottom: 2px solid #e1dfdd; }
.group { border-right: 1px solid #c8c6c4; display: flex; flex-direction: column; justify-content: space-between; }
.group h2 { font-size: 11px; line-height: 10px; text-align: center; }
.tools { display: grid; }
.tool { display: flex; flex-direction: column; align-items: center; line-height: 19px; padding-top: 4px; white-space: nowrap; }
.tool > svg { margin-bottom: 2px; }
.tool span { display: flex; align-items: center; gap: 3px; }
.caret { width: 8px; height: 6px; }
.off { color: #a19f9d; }
.clipboard { width: 192px; padding-left: 8px; }
.clipboard .tools { grid-template-columns: 50px 1fr; }
.small { padding-left: 6px; }
.small button { display: flex; align-items: center; height: 29px; }
.small svg { margin-right: 2px; }
.data { padding: 0 9px 0 9px; }
.data .tools { grid-template-columns: 48px 48px 58px 52px 48px 67px; }
.queries { padding: 0 8px 0 11px; }
.queries .tools { grid-template-columns: 64px 56px; }
.insert { padding: 0 10px 0 9px; }
.insert .tools { grid-template-columns: 48px 48px 60px; }
.calc { padding: 0 9px 0 11px; }
.calc .tools { grid-template-columns: 57px 59px; }
.share { padding: 0 10px; }
.share .tools { grid-template-columns: 49px; }
.collapse { margin-left: auto; align-self: flex-end; padding: 0 5px 4px; }

.workspace { display: flex; align-items: stretch; }
.views { width: 49px; border-right: 1px solid #e1dfdd; flex: none; }
.views button { display: flex; align-items: center; justify-content: center; width: 100%; height: 47px; }
.views .active { border-left: 4px solid #f2c811; padding-right: 4px; }
.report { flex: 1; min-width: 0; display: flex; flex-direction: column; }
.stage { display: flex; flex: 1; }
.canvas { flex: 1; background: #fff; border-right: 1px solid #a19f9d; padding-left: 8px; }
.visual { position: relative; width: 792px; height: 569px; border: 1px solid #c8c6c4; border-top: 0; display: flex; padding-left: 4px; }
.scroller { height: 564px; width: 750px; overflow: hidden; }
table { width: 750px; height: 569px; table-layout: fixed; border-collapse: separate; border-spacing: 0; font-size: 11px; line-height: 14px; }
.c-post { width: 520px; }
.c-link { width: 56px; }
.c-year { width: 36px; }
.c-qtr { width: 46px; }
.c-month { width: 62px; }
.c-day { width: 30px; }
th { height: 28px; font-weight: 400; border-bottom: 1px solid #b5d9f3; }
th, td { text-align: left; padding: 0 0 0 4px; white-space: nowrap; }
th:nth-child(2) { text-align: right; padding-right: 4px; }
th:last-child, td:last-child { text-align: right; padding-right: 4px; }
td:nth-child(n+3) { border-left: 1px solid #f8f7f7; }
tbody tr:nth-child(even) { background: #edebeb; }
td a { display: block; width: 12px; margin-left: 20px; color: #3b4f9e; }
td .seen { color: #7b3f9c; }
td svg { width: 12px; height: 10px; }
.vscroll { margin-left: 24px; width: 8px; background: #f3f2f1; padding: 12px 0 18px; display: flex; flex-direction: column; }
.vscroll i { height: 33px; margin: 8px 0 auto; background: #c8c6c4; }
.h { position: absolute; background: #9a9a9a; }
.tl-c, .tr-c, .bl-c, .br-c { width: 12px; height: 12px; background: none; border: 0 solid #9a9a9a; }
.tl-c { left: -2px; top: 0; border-width: 4px 0 0 4px; }
.tr-c { right: -2px; top: 0; border-width: 4px 4px 0 0; }
.bl-c { left: -2px; bottom: -2px; border-width: 0 0 4px 4px; }
.br-c { right: -2px; bottom: -2px; border-width: 0 4px 4px 0; }
.top, .bottom { left: 388px; width: 15px; height: 4px; }
.top { top: 0; }
.bottom { bottom: -2px; }
.left, .rite { top: 277px; width: 4px; height: 15px; }
.left { left: -2px; }
.rite { right: -2px; }
.mark-cols { left: 579px; top: -4px; width: 197px; height: 576px; }
.visual-tools { display: flex; align-items: center; gap: 15px; padding: 6px 0 0 700px; height: 26px; }
.page-edge { margin: 13px 0 40px -6px; border-top: 2px dotted #605e5c; }
.filters { width: 39px; background: #fff; display: flex; flex-direction: column; align-items: center; padding-top: 19px; border-right: 1px solid #e1dfdd; }
.filters > svg { margin-top: 42px; }
.filters h2 { writing-mode: vertical-rl; font-size: 16px; line-height: 20px; font-weight: 600; margin-top: 15px; }
.pages { height: 41px; display: flex; color: #605e5c; border-right: 1px solid #e1dfdd; }
.arrow { width: 23px; color: #c8c6c4; font-size: 9px; }
.page { width: 92px; font-size: 14px; background: #fff; border: 1px solid #a19f9d; border-top: 0; border-bottom: 3px solid #e3b90d; }
.add { width: 47px; margin: 2px 0 1px; background: #f2c811; display: flex; align-items: center; justify-content: center; }

.pane-head { display: flex; justify-content: space-between; align-items: center; height: 58px; }
.pane-head h2 { font-size: 17px; line-height: 24px; font-weight: 600; color: #605e5c; }
.pane-head button { color: #605e5c; padding-bottom: 6px; }
.viz { width: 215px; flex: none; border-right: 1px solid #e1dfdd; }
.viz .pane-head { padding: 0 14px 0 15px; }
.gallery { display: grid; grid-template-columns: repeat(6, 33px); padding: 1px 0 1px 6px; height: 173px; align-content: space-between; }
.gallery button { height: 28px; display: flex; align-items: center; justify-content: center; }
.gallery svg { width: 20px; height: 20px; }
.gallery .word { color: #2b84c8; font-size: 17px; font-weight: 700; }
.picked svg { outline: 3px solid #797775; outline-offset: 1px; }
.modes { position: relative; height: 44px; border-top: 1px solid #e1dfdd; display: flex; padding-left: 15px; align-items: flex-start; }
.modes button { height: 43px; padding-top: 8px; margin-right: 13px; display: flex; justify-content: center; }
.modes .active { width: 48px; border-bottom: 5px solid #f2c811; }
.modes button:nth-child(2) { margin-right: 22px; }
.mark-fields { left: -3px; top: 0; width: 79px; height: 54px; z-index: 1; }
.wells { position: relative; padding: 6px 0 0 5px; height: 416px; }
.wells h3 { padding-left: 10px; margin-bottom: 7px; }
.well { margin-right: 6px; height: 194px; background: #fff; border: 1px dashed #b3b0ad; padding: 4px 3px; display: flex; flex-direction: column; gap: 3px; }
.pill { position: relative; display: flex; align-items: center; height: 27px; border: 1px solid #c8c6c4; border-radius: 2px; background: #edebe9; padding-left: 5px; }
.pill > span { flex: 1; }
.pill > button { color: #777; margin-right: 6px; }
.dn { width: 14px; height: 8px; }
.cr { width: 11px; height: 11px; }
.open { flex-wrap: wrap; height: 118px; align-content: flex-start; padding-top: 4px; }
.open ul { width: 100%; padding: 3px 0 0 9px; line-height: 23px; }
.mark-arrow { left: 139px; top: -5px; width: 40px; height: 34px; }
.menu { position: absolute; z-index: 2; left: 156px; top: 23px; width: 240px; background: #fff; border: 4px solid #e0504a; padding: 0 5px 5px 0; color: #252423; }
.menu button { display: flex; align-items: center; justify-content: space-between; width: 100%; height: 28px; padding: 0 24px 0 36px; }
.menu .first { height: 24px; }
.menu hr { border: 0; border-top: 1px solid #e1dfdd; margin: 2px 0 2px 33px; }
.menu .hot { height: 35px; border: 4px solid #e0504a; background: #c8c8c8; padding: 0 0 0 32px; margin-top: 4px; }
.menu .ticked { justify-content: flex-start; gap: 14px; padding: 0 0 0 8px; height: 20px; }
.wells h2 { font-size: 17px; line-height: 24px; font-weight: 600; color: #605e5c; padding: 18px 0 15px 13px; }
.switches { display: grid; padding-left: 6px; row-gap: 16px; }
.switches label { display: flex; align-items: center; gap: 6px; padding-left: 11px; margin-bottom: 8px; }
.switches input { appearance: none; margin: 0; width: 36px; height: 14px; border-radius: 7px; background: linear-gradient(#605e5c, #605e5c) 0 6px / 100% 2px no-repeat; }
.switches input::before { content: ""; display: block; width: 14px; height: 14px; border-radius: 50%; border: 2px solid #605e5c; background: #f3f2f1; }
.switches input:checked::before { background: #605e5c; margin-left: auto; }
.thumb { position: absolute; right: 0; top: 0; width: 7px; height: 372px; background: #d2d0ce; border-radius: 3px; }

.fields { width: 215px; flex: none; }
.fields .pane-head { padding: 0 14px 0 15px; }
.search { display: flex; align-items: center; gap: 9px; margin: 5px 5px 6px; height: 34px; border: 1px solid #c8c6c4; background: #fff; padding-left: 13px; }
.search input { border: 0; outline: 0; font: inherit; font-size: 14px; padding: 0; width: 130px; background: none; }
.search input::placeholder { color: #484644; }
.tree { border-top: 1px solid #e1dfdd; padding-top: 12px; }
.node { display: flex; align-items: center; height: 28px; padding-left: 6px; }
.node b { font-weight: 600; margin-left: 6px; }
.tbl { margin: 8px 0 0 8px; }
.leaf { display: grid; grid-template-columns: 24px 19px 25px 1fr; align-items: center; height: 27px; padding-left: 15px; }
.leaf:nth-child(2) { margin-top: 6px; }
.leaf input { appearance: none; margin: 0; width: 14px; height: 14px; border: 1px solid #797775; border-radius: 2px; }
.leaf input:checked { background: #f2c811; border-color: #f2c811; }
.leaf input:checked::before { content: ""; display: block; width: 7px; height: 4px; margin: 2px 0 0 2px; border: solid #605e5c; border-width: 0 0 1px 1px; transform: rotate(-45deg); }
.kgc { color: #777; }
.status { display: flex; justify-content: space-between; align-items: center; height: 29px; border-top: 1px solid #e1dfdd; padding: 0 7px 0 6px; color: #605e5c; font-size: 14px; }
```
